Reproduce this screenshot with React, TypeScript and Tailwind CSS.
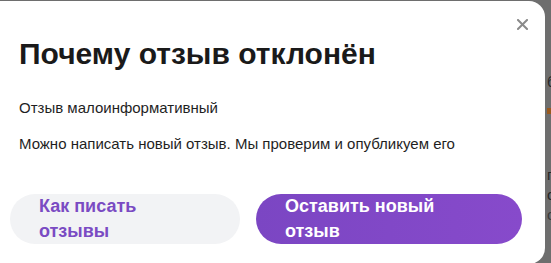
import React from "react";

export default function App() {
  return (
    <div
      className="flex w-[551px] h-[263px] overflow-hidden bg-[#6e6e6e]"
      style={{ fontFamily: '"Liberation Sans", Arial, sans-serif' }}
    >
      <div className="relative mt-[1px] w-[545px] h-[263px] shrink-0 rounded-r-[16px] bg-white pl-[10px] pt-[35px]">
        <button className="absolute right-[17px] top-[18px] w-[11px] h-[11px] text-[#8a8a8a]" aria-label="Закрыть">
          <svg viewBox="0 0 11 11" width="11" height="11" fill="none" stroke="currentColor" strokeWidth="2" strokeLinecap="square">
            <path d="M1 1L10 10M10 1L1 10" />
          </svg>
        </button>
        <h1 className="pl-[9px] text-[30px] leading-[36px] font-bold text-[#1a1a1a]">
          Почему отзыв отклонён
        </h1>
        <p className="mt-[26px] pl-[9px] text-[15px] leading-[20px] text-[#1f1f1f]">
          Отзыв малоинформативный
        </p>
        <p className="mt-[16px] pl-[9px] text-[15px] leading-[20px] text-[#1f1f1f]">
          Можно написать новый отзыв. Мы проверим и опубликуем его
        </p>
        <div className="mt-[40px] flex gap-[16px]">
          <button className="h-[50px] w-[230px] rounded-full bg-[#f2f3f5] pl-[29px] text-left text-[18px] leading-[25px] font-bold text-[#7a4bc3] overflow-hidden">
            Как писать
            <br />
            отзывы
          </button>
          <button className="h-[50px] w-[266px] rounded-full bg-gradient-to-r from-[#7b46c3] to-[#874acb] pl-[29px] text-left text-[18px] leading-[25px] font-bold text-white overflow-hidden">
            Оставить новый
            <br />
            отзыв
          </button>
        </div>
      </div>
      <div className="flex flex-col pl-[2px] text-[15px] leading-[20px] text-[#262626] whitespace-nowrap">
        <span className="mt-[72px]">бы</span>
        <span className="mt-[16px] h-[6px] w-[6px] bg-[#9a5a1e]" />
        <span className="mt-[51px]">пр</span>
        <span>ос</span>
        <span className="text-[#3a3a3a]">с</span>
      </div>
    </div>
  );
}
